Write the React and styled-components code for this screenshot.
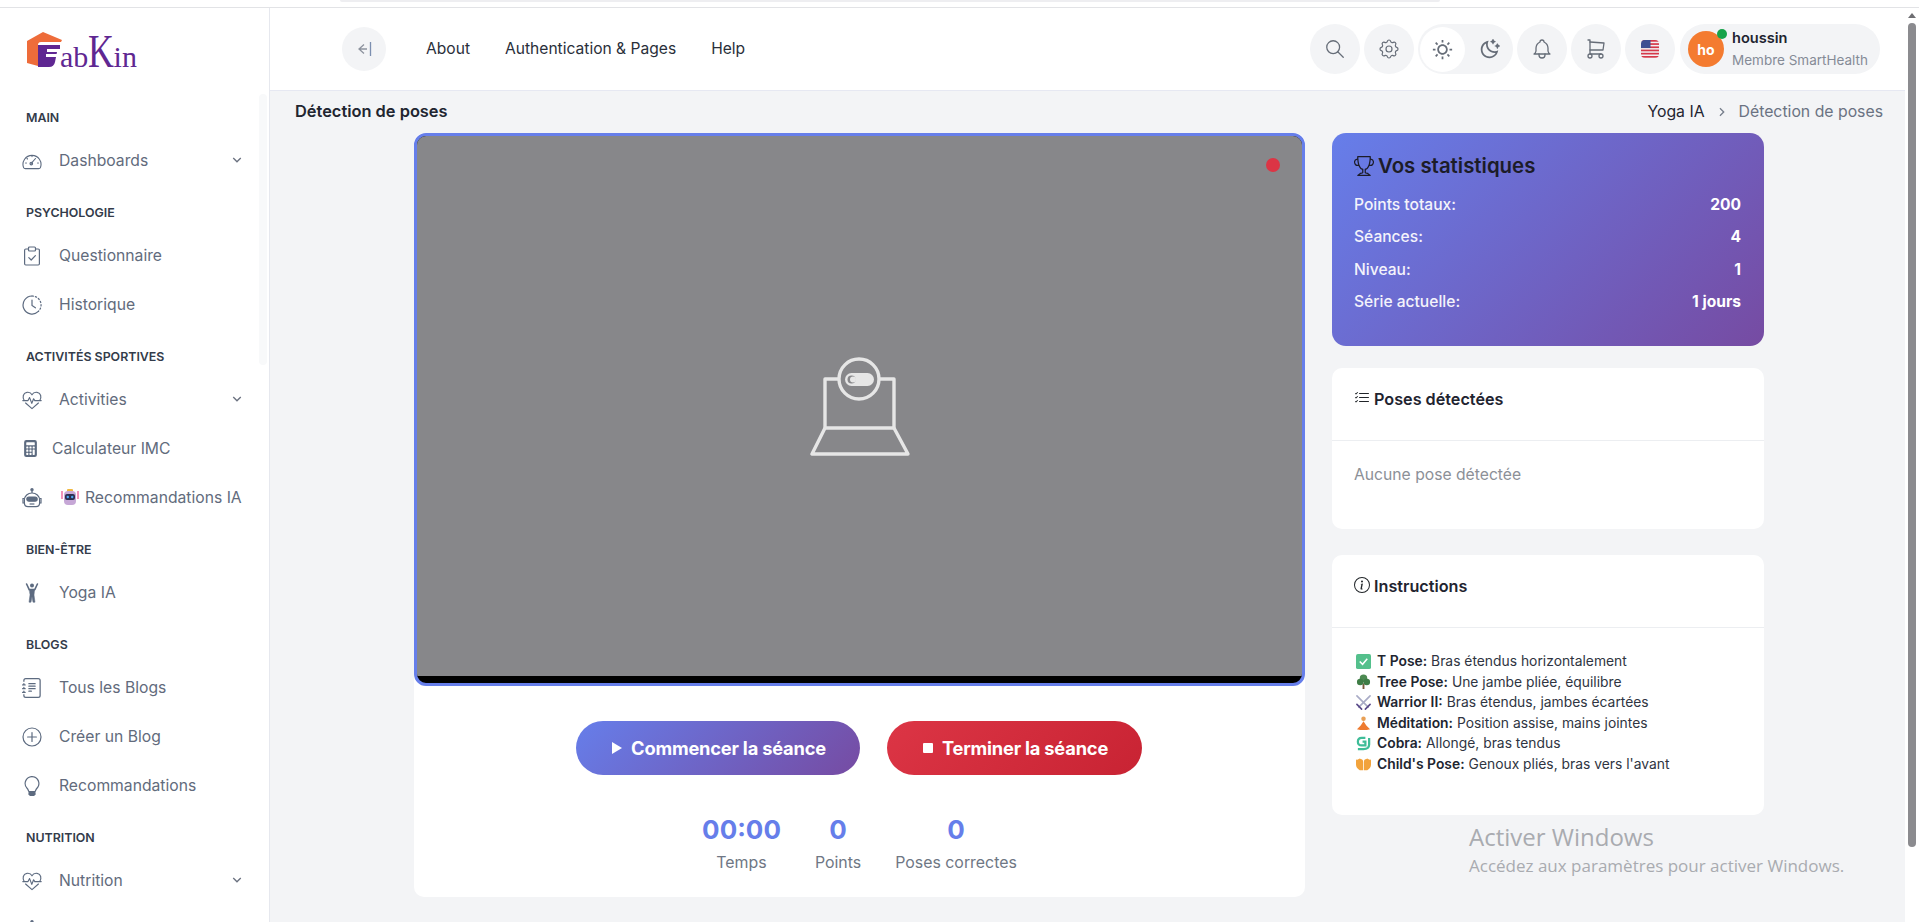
import React from "react";
import styled, { createGlobalStyle } from "styled-components";
import { RiSunLine, RiMoonClearLine, RiArrowDownSLine } from "react-icons/ri";
import { BsJournalText, BsLightbulb, BsTrophy, BsListCheck, BsInfoCircle, BsCalculatorFill } from "react-icons/bs";
import { TbBell, TbShoppingCart, TbSearch, TbSettings } from "react-icons/tb";

const Global = createGlobalStyle`
  html, body { margin: 0; padding: 0; height: 922px; overflow: hidden; background: #f3f4f6; }
  body { font-family: Inter, "Liberation Sans", sans-serif; color: #212529; }
  * { box-sizing: border-box; }
`;
const Page = styled.div`
  height: 922px; overflow: hidden; display: flex; flex-direction: column; position: relative;
`;
const TopStrip = styled.div`
  height: 8px; flex: none; background: #fff; border-bottom: 1px solid #e2e3e6; position: relative;
`;
const UrlEdge = styled.div`
  position: absolute; left: 340px; top: 0; width: 1100px; height: 2px; background: #eeeef1; border-radius: 0 0 6px 6px;
`;
const Shell = styled.div`
  flex: 1; display: flex; min-height: 0;
`;
const Side = styled.aside`
  width: 270px; flex: none; background: #fff; border-right: 1px solid #e6e8ee; position: relative; overflow: hidden;
`;
const SideTrack = styled.div`
  position: absolute; left: 259px; top: 86px; width: 8px; height: 271px; background: #f8f9fa; border-radius: 4px;
`;
const LogoRow = styled.div`
  height: 84px; padding: 24px 0 0 27px; display: flex; align-items: flex-start;
`;
const LogoWord = styled.span`
  font-family: "Liberation Serif", serif; color: #5f2792; font-size: 30px; line-height: 36px;
  white-space: nowrap; display: flex; align-items: baseline; margin: 2px 0 0 -2px;
  b { font-weight: 400; font-size: 46px; line-height: 36px; display: inline-block; transform: scaleX(.78); transform-origin: left bottom; margin-right: -8px; }
`;
const Section = styled.div`
  font-size: 12.4px; font-weight: 600; color: #333b4a; text-transform: uppercase; height: 20px; line-height: 20px;
  padding-left: 26px; margin-top: ${p => p.$first ? "16px" : "18px"}; margin-bottom: 8px;
`;
const Item = styled.div`
  display: flex; align-items: center; height: 49px; padding-left: 22px; color: #626b7c; font-size: 15.7px; position: relative; white-space: nowrap;
`;
const ItemIcon = styled.span`
  width: ${p => p.$w || 37}px; flex: none; display: flex; align-items: center; justify-content: flex-start; color: #5d6b80;
  svg { width: ${p => p.$s || 20}px; height: ${p => p.$s || 20}px; }
`;
const Chevron = styled.span`
  position: absolute; left: 229px; top: 16px; color: #6b7280; display: flex;
  svg { width: 16px; height: 16px; }
`;
const Main = styled.main`
  flex: 1; min-width: 0; display: flex; flex-direction: column; position: relative;
`;
const Header = styled.header`
  height: 83px; flex: none; background: #fff; border-bottom: 1px solid #e6e8f2; display: flex; align-items: center;
  padding: 0 39px 0 72px;
`;
const CollapseBtn = styled.div`
  width: 44px; height: 44px; border-radius: 50%; background: #f3f4f6; display: flex; align-items: center; justify-content: center; margin-right: 40px;
`;
const NavLink = styled.a`
  font-size: 15.6px; color: #2a2f3a; margin-right: 35px; white-space: nowrap; position: relative; top: -1px;
`;
const Tools = styled.div`
  margin-left: auto; display: flex; gap: 4px; align-items: center;
`;
const RoundBtn = styled.div`
  width: 50px; height: 50px; border-radius: 50%; background: #f3f4f6; display: flex; align-items: center; justify-content: center; color: #666d78;
  svg { width: ${p => p.$s || 24}px; height: ${p => p.$s || 24}px; }
`;
const Toggle = styled.div`
  width: 95px; height: 50px; border-radius: 25px; background: #f3f4f6; display: flex; align-items: center; padding-left: 2px; color: #666d78;
  svg { width: 21px; height: 21px; }
`;
const ToggleOn = styled.div`
  width: 45px; height: 45px; border-radius: 50%; background: #fff; display: flex; align-items: center; justify-content: center; margin-right: 2px;
`;
const ToggleOff = styled.div`
  width: 44px; display: flex; justify-content: center;
`;
const UserPill = styled.div`
  width: 200px; height: 50px; border-radius: 25px; background: #f3f4f6; display: flex; align-items: center; padding-left: 8px; margin-left: 1px;
`;
const Avatar = styled.div`
  width: 36px; height: 36px; border-radius: 50%; background: #f47b30; color: #fff; font-size: 14px; font-weight: 700;
  display: flex; align-items: center; justify-content: center; position: relative; flex: none;
`;
const OnlineDot = styled.span`
  position: absolute; right: -3px; top: -2px; width: 10px; height: 10px; border-radius: 50%; background: #17a34a;
`;
const UserText = styled.div`
  margin-left: 8px; display: flex; flex-direction: column; gap: 6px;
`;
const UserName = styled.div`
  font-size: 14.6px; font-weight: 600; color: #1f2430; line-height: 16px;
`;
const UserRole = styled.div`
  font-size: 13.5px; color: #858b96; line-height: 16px; white-space: nowrap;
`;
const Crumbs = styled.div`
  height: 42px; flex: none; display: flex; align-items: flex-start; padding: 10px 36px 0 25px;
`;
const PageTitle = styled.h1`
  margin: 0; font-size: 16.4px; line-height: 20px; font-weight: 600; color: #212530;
`;
const Trail = styled.div`
  margin-left: auto; margin-top: 1px; display: flex; align-items: center; font-size: 15.8px; line-height: 20px; color: #1f2430; gap: 9px;
`;
const TrailLast = styled.span`
  color: #6a7282;
`;
const TrailSep = styled.span`
  color: #777f8c; display: flex;
  svg { width: 16px; height: 16px; }
`;
const Content = styled.div`
  display: grid; grid-template-columns: 891px 432px; column-gap: 27px; padding-left: 144px; align-items: start;
`;
const VideoCard = styled.section`
  background: #fff; border-radius: 10px; height: 764px; display: flex; flex-direction: column;
`;
const Video = styled.div`
  height: 553px; border: 3px solid #667eea; border-radius: 12px; background: #000; overflow: hidden; position: relative; flex: none;
`;
const VideoFill = styled.div`
  height: 540px; background: #87878a; display: flex; align-items: center; justify-content: center;
`;
const RecDot = styled.span`
  position: absolute; right: 22px; top: 22px; width: 14px; height: 14px; border-radius: 50%; background: #dc3545;
`;
const Buttons = styled.div`
  display: flex; justify-content: center; gap: 27px; margin-top: 35px; padding-right: 2px;
`;
const ActionBtn = styled.button`
  height: 54px; width: ${p => p.$w}px; border: 0; border-radius: 27px; color: #fff; font-family: inherit; font-size: 18.3px; font-weight: 700;
  display: flex; align-items: center; justify-content: center; gap: 9px; letter-spacing: -0.2px; padding: 0 0 0 3px;
  background: ${p => p.$danger ? "linear-gradient(135deg,#dc3545,#c82333)" : "linear-gradient(135deg,#667eea,#764ba2)"};
  svg { flex: none; }
`;
const Metrics = styled.div`
  display: flex; justify-content: center; gap: 34px; margin-top: 38px;
`;
const Metric = styled.div`
  display: flex; flex-direction: column; align-items: center; gap: 6px;
`;
const MetricValue = styled.div`
  font-size: 26px; line-height: 34px; font-weight: 700; color: #667eea;
`;
const MetricLabel = styled.div`
  font-size: 15.9px; line-height: 20px; color: #6f7784;
`;
const Column = styled.div`
  display: flex; flex-direction: column; gap: 22px;
`;
const StatsCard = styled.section`
  height: 213px; border-radius: 14px; background: linear-gradient(135deg,#667eea,#764ba2); padding: 18px 23px 17px 22px; color: #fff;
`;
const StatsTitle = styled.h3`
  margin: 0 0 12.5px; display: flex; align-items: center; gap: 4px; color: #1c1c28; font-size: 20.4px; line-height: 30px; font-weight: 600;
  svg { width: 20px; height: 20px; }
`;
const StatRow = styled.div`
  display: flex; justify-content: space-between; font-size: 15.6px; line-height: 22px; font-weight: 500; margin-bottom: 10.5px; color: #f4f3fb;
  b { font-weight: 700; color: #fff; }
`;
const Panel = styled.section`
  background: #fff; border-radius: 10px; height: ${p => p.$h}px; margin-top: ${p => p.$mt || 0}px;
`;
const PanelHead = styled.div`
  height: 73px; border-bottom: 1px solid #eceef1; padding: 20px 22px 0; display: flex; align-items: flex-start; gap: 4px;
  font-size: 16.2px; line-height: 22px; font-weight: 600; color: #1f2430;
  svg { width: 16px; height: 16px; margin-top: 2px; color: #212529; }
`;
const EmptyText = styled.div`
  padding: 23px 22px; font-size: 15.7px; line-height: 22px; color: #8c9097;
`;
const Lines = styled.div`
  padding: 23px 22px; font-size: 13.85px; line-height: 20.6px; color: #2f3542;
`;
const Line = styled.div`
  display: flex; align-items: center; white-space: nowrap;
  b { font-weight: 600; margin-right: 4px; color: #212530; }
`;
const Emo = styled.span`
  width: 23px; flex: none; display: flex; padding-left: 2px;
  svg { width: 15px; height: 15px; }
`;
const Watermark = styled.div`
  position: absolute; left: 1469px; top: 821px; color: #a9abb0; font-family: "Open Sans", sans-serif; pointer-events: none; white-space: nowrap;
`;
const WmTitle = styled.div`
  font-size: 24px; line-height: 32px;
`;
const WmSub = styled.div`
  font-size: 17px; line-height: 20px; margin-top: 3px;
`;
const Scrollbar = styled.div`
  position: absolute; right: 0; top: 8px; width: 14px; height: 914px; background: #fff;
`;
const ScrollThumb = styled.div`
  position: absolute; left: 3px; top: 15px; width: 8px; height: 824px; background: #8b8b8f; border-radius: 4px;
`;
const ScrollArrow = styled.div`
  position: absolute; left: 3px; top: 5px; width: 0; height: 0; border-left: 4px solid transparent; border-right: 4px solid transparent; border-bottom: 5px solid #6e6e72;
`;

const Logo = () => (
  <svg width="35" height="36" viewBox="0 0 35 36" style={{ flex: "none" }}>
    <path d="M0 9 L16 0 L35 8 L34 10 L14 10 Q11 10 11 13 V34 L0 31 Z" fill="#ee6c3a" />
    <path d="M11 13 H33 V17 H20 V20 H30 L28 30 Q27 35 22 35 H11 Z" fill="#5f2792" />
    <rect x="19" y="22" width="11" height="3" fill="#fff" />
  </svg>
);
const Gauge = () => (
  <svg viewBox="0 0 20 20" fill="none" stroke="currentColor" strokeWidth="1.1" strokeLinecap="round">
    <path d="M1.6 16.6 A9 9 0 1 1 18.4 16.6 Q18 17.6 16.6 17.6 H3.4 Q2 17.6 1.6 16.6Z" />
    <path d="M9 12.6 L13.5 7.5 M10 5 v.6 M5 7.5 l.5.5 M3.6 12 h.8 M15.6 12 h.8" />
    <circle cx="9.3" cy="12.6" r="1.3" />
  </svg>
);
const Survey = () => (
  <svg viewBox="0 0 20 20" fill="none" stroke="currentColor" strokeWidth="1.2" strokeLinecap="round" strokeLinejoin="round">
    <path d="M6.5 3 H3.8 Q2.6 3 2.6 4.2 V17.8 Q2.6 19 3.8 19 H16.2 Q17.4 19 17.4 17.8 V4.2 Q17.4 3 16.2 3 H13.5" />
    <rect x="6.5" y="1" width="7" height="4" rx="1" />
    <path d="M6.8 11.6 L9.2 14 L13.4 9.6" />
  </svg>
);
const ClockIcon = () => (
  <svg viewBox="0 0 20 20" fill="none" stroke="currentColor" strokeWidth="1.2" strokeLinecap="round">
    <path d="M10 1 A9 9 0 1 0 16.4 16.4" />
    <path d="M10 1 A9 9 0 0 1 16.4 16.4" strokeDasharray="1.4 2" />
    <path d="M10 5 V10.4 L13.4 12.8" />
  </svg>
);
const HeartPulse = () => (
  <svg viewBox="0 0 20 20" fill="none" stroke="currentColor" strokeWidth="1.15" strokeLinejoin="round" strokeLinecap="round">
    <path d="M2.2 10.5 C.2 7.4 1 3 4.8 2.4 C7 2 9 3 10 4.8 C11 3 13 2 15.2 2.4 C19 3 19.8 7.4 17.8 10.5" />
    <path d="M3.6 13 L10 18.6 L16.4 13" />
    <path d="M.8 10.6 H6 L7.6 7.6 L9.8 13.4 L11.6 8.8 L12.8 10.6 H19.2" />
  </svg>
);
const PlusCircle = () => (
  <svg viewBox="0 0 20 20" fill="none" stroke="currentColor" strokeWidth="1.2" strokeLinecap="round">
    <circle cx="10" cy="10" r="9" />
    <path d="M10 5.6 V14.4 M5.6 10 H14.4" />
  </svg>
);
const Robot = () => (
  <svg viewBox="0 0 20 20" fill="none" stroke="currentColor" strokeWidth="1.2">
    <circle cx="10" cy="1.8" r="1.1" fill="currentColor" />
    <path d="M10 3 V5" />
    <path d="M2.4 12 A7.6 7 0 0 1 17.6 12 V15 Q17.6 18.6 14 18.6 H6 Q2.4 18.6 2.4 15 Z" />
    <path d="M2.4 10.5 H1 V15 H2.4 M17.6 10.5 H19 V15 H17.6" />
    <rect x="4.8" y="9" width="10.4" height="4.2" rx="2.1" fill="currentColor" />
    <path d="M7.6 16 H12.4" />
  </svg>
);
const YogaFigure = () => (
  <svg viewBox="0 0 20 20" fill="currentColor" stroke="currentColor" strokeLinecap="round" strokeLinejoin="round">
    <circle cx="10" cy="2.6" r="2" stroke="none" />
    <path d="M4.6 1 L7.2 6.6 H12.8 L15.4 1" fill="none" strokeWidth="1.6" />
    <path d="M7.4 6.6 H12.6 L12 12 L13 19.2 H11 L10 13.6 L9 19.2 H7 L8 12 Z" strokeWidth=".5" />
  </svg>
);
const Collapse = () => (
  <svg width="16" height="16" viewBox="0 0 16 16" fill="none" strokeWidth="1.3">
    <path d="M8 3.5 L3 8 L8 12.5 M3 8 H11" stroke="#8d939e" />
    <path d="M14.5 1 V15" stroke="#7c8fb0" />
  </svg>
);
const Flag = () => (
  <svg viewBox="0 0 18 18" style={{ width: 18, height: 18 }}>
    <defs><clipPath id="fc"><rect width="18" height="18" rx="4" /></clipPath></defs>
    <g clipPath="url(#fc)">
      <rect width="18" height="18" fill="#f2f2f4" />
      {[0, 3.2, 6.4, 9.6, 12.8, 16].map(y => <rect key={y} y={y} width="18" height="1.7" fill="#d5394a" />)}
      <rect width="9.5" height="8" fill="#3f4f92" />
    </g>
  </svg>
);
const CameraOff = () => (
  <svg width="100" height="102" viewBox="0 0 100 102" fill="none" stroke="#e6e6e6" strokeWidth="3.4" strokeLinejoin="round">
    <path d="M29 24 H15 V73 H84 V24 H69" />
    <circle cx="49" cy="24" r="20" />
    <rect x="35" y="18" width="29" height="13" rx="6.5" fill="#e6e6e6" stroke="none" />
    <circle cx="41.5" cy="24.5" r="4" fill="#87878a" stroke="none" />
    <circle cx="43" cy="24.5" r="3" fill="#e6e6e6" stroke="none" />
    <path d="M15 73 L2 99 H98 L84 73" />
  </svg>
);
const Check = () => (
  <svg viewBox="0 0 16 16"><rect width="16" height="16" rx="2" fill="#54c08c" /><path d="M4 8 L7 11 L12 5" stroke="#fff" strokeWidth="1.6" fill="none" /></svg>
);
const Tree = () => (
  <svg viewBox="0 0 16 16"><rect x="7" y="10" width="2" height="6" fill="#7a5a3c" /><circle cx="8" cy="4.5" r="4" fill="#4d8a52" /><circle cx="4.5" cy="8.5" r="3.5" fill="#3f7d46" /><circle cx="11.5" cy="8.5" r="3.5" fill="#3f7d46" /></svg>
);
const Swords = () => (
  <svg viewBox="0 0 16 16" strokeLinecap="round"><path d="M1 1 L13 13 M15 1 L3 13" stroke="#a9abc6" strokeWidth="1.7" /><path d="M10 15 L15 10 M1 10 L6 15" stroke="#5a4a8a" strokeWidth="1.7" /></svg>
);
const Meditate = () => (
  <svg viewBox="0 0 16 16"><circle cx="8" cy="3" r="2.4" fill="#e8a055" /><path d="M8 5.5 L11 10 L15 14 Q8 16 1 14 L5 10 Z" fill="#ee7b30" /></svg>
);
const Snake = () => (
  <svg viewBox="0 0 16 16" fill="none" stroke="#3fbd98" strokeWidth="2.4"><path d="M14 2 V9 Q14 14 8 14 H2" /><path d="M10 2 H6 Q2 2 2 6 Q2 10 6 10 H10 V6 H7" /></svg>
);
const Palms = () => (
  <svg viewBox="0 0 16 16" fill="#f2a33c"><path d="M0 4 Q0 2 1.5 3 L3 2 Q4 1 5 2 L6 2.5 Q7.6 3 7.6 5 V14 H4 Q0 12 0 8Z" /><path d="M16 4 Q16 2 14.5 3 L13 2 Q12 1 11 2 L10 2.5 Q8.4 3 8.4 5 V14 H12 Q16 12 16 8Z" /></svg>
);
const RobotFace = () => (
  <svg width="18" height="17" viewBox="0 0 18 17" style={{ marginRight: 6, flex: "none" }}>
    <path d="M1 2 V10 M17 2 V10" stroke="#ea4d8c" strokeWidth="1.2" />
    <rect x="6" y="0" width="6" height="3" rx="1" fill="#f0b942" />
    <rect x="3" y="2" width="12" height="14" rx="4" fill="#c6a7d6" />
    <rect x="4" y="5" width="10" height="6" rx="2" fill="#2c3050" />
    <circle cx="6.8" cy="8" r="1.2" fill="#4ea5f0" /><circle cx="11.2" cy="8" r="1.2" fill="#4ea5f0" />
  </svg>
);

const nav = [
  { s: "Main", first: true },
  { t: "Dashboards", i: <Gauge />, more: true },
  { s: "Psychologie" },
  { t: "Questionnaire", i: <Survey /> },
  { t: "Historique", i: <ClockIcon /> },
  { s: "Activités sportives" },
  { t: "Activities", i: <HeartPulse />, more: true },
  { t: "Calculateur IMC", i: <BsCalculatorFill />, size: 17, w: 30 },
  { t: "Recommandations IA", i: <Robot />, w: 39, robot: true },
  { s: "Bien-être" },
  { t: "Yoga IA", i: <YogaFigure /> },
  { s: "Blogs" },
  { t: "Tous les Blogs", i: <BsJournalText /> },
  { t: "Créer un Blog", i: <PlusCircle /> },
  { t: "Recommandations", i: <BsLightbulb /> },
  { s: "Nutrition" },
  { t: "Nutrition", i: <HeartPulse />, more: true },
  { t: "", i: <Robot /> },
];

const lines = [
  [<Check />, "T Pose:", "Bras étendus horizontalement"],
  [<Tree />, "Tree Pose:", "Une jambe pliée, équilibre"],
  [<Swords />, "Warrior II:", "Bras étendus, jambes écartées"],
  [<Meditate />, "Méditation:", "Position assise, mains jointes"],
  [<Snake />, "Cobra:", "Allongé, bras tendus"],
  [<Palms />, "Child's Pose:", "Genoux pliés, bras vers l'avant"],
];
const stats = [["Points totaux:", "200"], ["Séances:", "4"], ["Niveau:", "1"], ["Série actuelle:", "1 jours"]];

export default function App() {
  return (
    <Page>
      <Global />
      <TopStrip><UrlEdge /></TopStrip>
      <Shell>
        <Side>
          <SideTrack />
          <LogoRow>
            <Logo />
            <LogoWord>ab<b>K</b>in</LogoWord>
          </LogoRow>
          {nav.map((n, i) => n.s
            ? <Section key={i} $first={n.first}>{n.s}</Section>
            : (
              <Item key={i}>
                <ItemIcon $w={n.w} $s={n.size}>{n.i}</ItemIcon>
                {n.robot && <RobotFace />}
                {n.t}
                {n.more && <Chevron><RiArrowDownSLine /></Chevron>}
              </Item>
            ))}
        </Side>
        <Main>
          <Header>
            <CollapseBtn><Collapse /></CollapseBtn>
            <NavLink>About</NavLink>
            <NavLink>Authentication &amp; Pages</NavLink>
            <NavLink>Help</NavLink>
            <Tools>
              <RoundBtn $s={22}><TbSearch strokeWidth={1.4} /></RoundBtn>
              <RoundBtn><TbSettings strokeWidth={1.2} /></RoundBtn>
              <Toggle>
                <ToggleOn><RiSunLine /></ToggleOn>
                <ToggleOff><RiMoonClearLine /></ToggleOff>
              </Toggle>
              <RoundBtn><TbBell strokeWidth={1.3} /></RoundBtn>
              <RoundBtn><TbShoppingCart strokeWidth={1.3} /></RoundBtn>
              <RoundBtn><Flag /></RoundBtn>
              <UserPill>
                <Avatar>ho<OnlineDot /></Avatar>
                <UserText>
                  <UserName>houssin</UserName>
                  <UserRole>Membre SmartHealth</UserRole>
                </UserText>
              </UserPill>
            </Tools>
          </Header>
          <Crumbs>
            <PageTitle>Détection de poses</PageTitle>
            <Trail>
              <span>Yoga IA</span>
              <TrailSep><RiArrowDownSLine style={{ transform: "rotate(-90deg)" }} /></TrailSep>
              <TrailLast>Détection de poses</TrailLast>
            </Trail>
          </Crumbs>
          <Content>
            <VideoCard>
              <Video>
                <VideoFill><CameraOff /></VideoFill>
                <RecDot />
              </Video>
              <Buttons>
                <ActionBtn $w={284}>
                  <svg width="10" height="12" viewBox="0 0 10 12"><path d="M0 0 L10 6 L0 12Z" fill="#fff" /></svg>
                  Commencer la séance
                </ActionBtn>
                <ActionBtn $w={255} $danger>
                  <svg width="10" height="10" viewBox="0 0 10 10"><rect width="10" height="10" rx="1" fill="#fff" /></svg>
                  Terminer la séance
                </ActionBtn>
              </Buttons>
              <Metrics>
                <Metric><MetricValue>00:00</MetricValue><MetricLabel>Temps</MetricLabel></Metric>
                <Metric><MetricValue>0</MetricValue><MetricLabel>Points</MetricLabel></Metric>
                <Metric><MetricValue>0</MetricValue><MetricLabel>Poses correctes</MetricLabel></Metric>
              </Metrics>
            </VideoCard>
            <Column>
              <StatsCard>
                <StatsTitle><BsTrophy />Vos statistiques</StatsTitle>
                {stats.map(([a, b]) => <StatRow key={a}><span>{a}</span><b>{b}</b></StatRow>)}
              </StatsCard>
              <Panel $h={161}>
                <PanelHead><BsListCheck />Poses détectées</PanelHead>
                <EmptyText>Aucune pose détectée</EmptyText>
              </Panel>
              <Panel $h={260} $mt={4}>
                <PanelHead><BsInfoCircle />Instructions</PanelHead>
                <Lines>
                  {lines.map(([ic, a, b]) => <Line key={a}><Emo>{ic}</Emo><b>{a}</b>{b}</Line>)}
                </Lines>
              </Panel>
            </Column>
          </Content>
        </Main>
      </Shell>
      <Scrollbar><ScrollArrow /><ScrollThumb /></Scrollbar>
      <Watermark>
        <WmTitle>Activer Windows</WmTitle>
        <WmSub>Accédez aux paramètres pour activer Windows.</WmSub>
      </Watermark>
    </Page>
  );
}
